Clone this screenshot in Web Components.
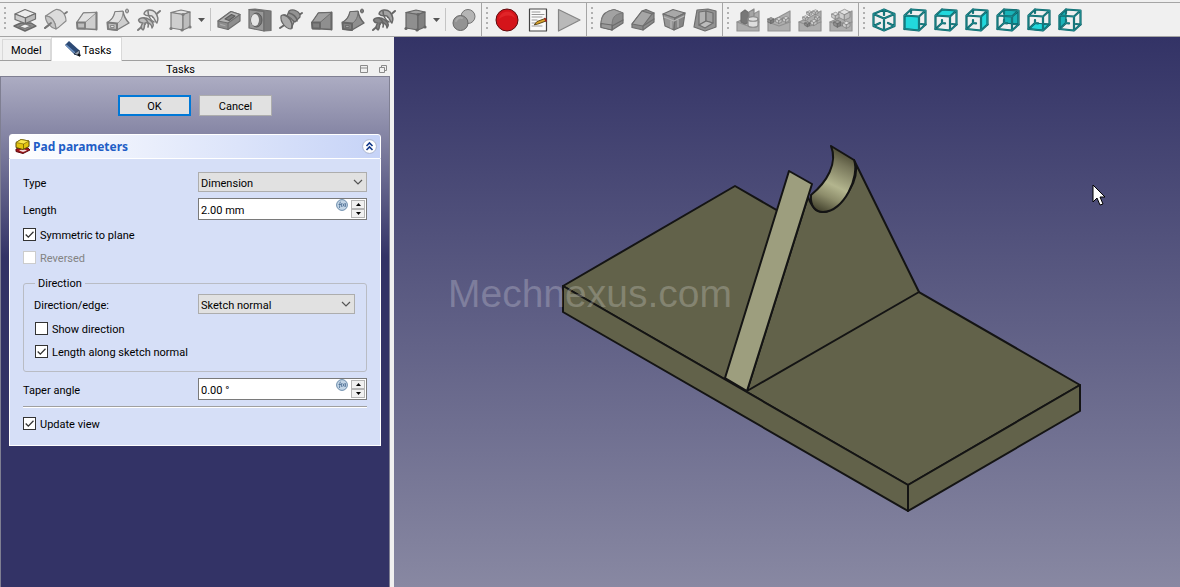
<!DOCTYPE html>
<html lang="en">
<head>
<meta charset="utf-8">
<title>Pad parameters</title>
<style>
  html, body { height: 100%; margin: 0; }
  body { font: 11px/14px Roboto, "Liberation Sans", sans-serif; color: #000; background: #f0f0f0; overflow: hidden; }
</style>
</head>
<body>
<cad-window>
  <tool-bar slot="tools">
    <tool-button icon="pad" label="Pad"></tool-button>
    <tool-button icon="revolution" label="Revolution"></tool-button>
    <tool-button icon="loft" label="Additive loft"></tool-button>
    <tool-button icon="pipe" label="Additive pipe"></tool-button>
    <tool-button icon="helix" label="Additive helix"></tool-button>
    <tool-button icon="box" label="Additive primitive" menu></tool-button>
    <tool-separator></tool-separator>
    <tool-button icon="pocket" label="Pocket"></tool-button>
    <tool-button icon="hole" label="Hole"></tool-button>
    <tool-button icon="groove" label="Groove"></tool-button>
    <tool-button icon="subloft" label="Subtractive loft"></tool-button>
    <tool-button icon="subpipe" label="Subtractive pipe"></tool-button>
    <tool-button icon="subhelix" label="Subtractive helix"></tool-button>
    <tool-button icon="subbox" label="Subtractive primitive" menu></tool-button>
    <tool-separator></tool-separator>
    <tool-button icon="boolean" label="Boolean operation"></tool-button>
  </tool-bar>
  <tool-bar slot="tools">
    <tool-button icon="record" label="Record macro"></tool-button>
    <tool-button icon="macros" label="Macros"></tool-button>
    <tool-button icon="play" label="Execute macro"></tool-button>
  </tool-bar>
  <tool-bar slot="tools">
    <tool-button icon="fillet" label="Fillet"></tool-button>
    <tool-button icon="chamfer" label="Chamfer"></tool-button>
    <tool-button icon="draft" label="Draft"></tool-button>
    <tool-button icon="thickness" label="Thickness"></tool-button>
  </tool-bar>
  <tool-bar slot="tools">
    <tool-button icon="mirror" label="Mirrored"></tool-button>
    <tool-button icon="linear" label="Linear pattern"></tool-button>
    <tool-button icon="polar" label="Polar pattern"></tool-button>
    <tool-button icon="multi" label="MultiTransform"></tool-button>
  </tool-bar>
  <tool-bar slot="tools" class="last">
    <tool-button icon="iso" label="Isometric"></tool-button>
    <tool-button icon="front" label="Front"></tool-button>
    <tool-button icon="top" label="Top"></tool-button>
    <tool-button icon="right" label="Right"></tool-button>
    <tool-button icon="rear" label="Rear"></tool-button>
    <tool-button icon="bottom" label="Bottom"></tool-button>
    <tool-button icon="left" label="Left"></tool-button>
  </tool-bar>

  <combo-dock slot="dock">
    <task-box heading="Pad parameters">
      <select-field label="Type" value="Dimension"></select-field>
      <spin-field label="Length" value="2.00 mm"></spin-field>
      <check-field label="Symmetric to plane" checked></check-field>
      <check-field label="Reversed" disabled></check-field>
      <group-box heading="Direction">
        <select-field class="inner" label="Direction/edge:" value="Sketch normal"></select-field>
        <check-field label="Show direction"></check-field>
        <check-field label="Length along sketch normal" checked></check-field>
      </group-box>
      <spin-field label="Taper angle" value="0.00 °"></spin-field>
      <line-rule></line-rule>
      <check-field label="Update view" checked></check-field>
    </task-box>
  </combo-dock>

  <model-view slot="view"></model-view>
</cad-window>

<script>
const define = (name, build) => customElements.define(name, class extends HTMLElement {
  constructor() { super(); this.attachShadow({ mode: "open" }); }
  connectedCallback() { this.shadowRoot.innerHTML = build(this); }
});
const path = (d, fill = "none", stroke = "#6e6e6e", w = 1.2) =>
  `<path d="${d}" fill="${fill}" stroke="${stroke}" stroke-width="${w}" stroke-linejoin="round" stroke-linecap="round"/>`;

/* palettes: additive tools are light grey, subtractive ones darker */
const LIGHT = ["#e2e2e2", "#cecece", "#bdbdbd", "#7c7c7c"];
const DARK = ["#a2a2a2", "#8f8f8f", "#808080", "#666"];

const loft = ([a, b, c, s]) =>
  path("M2 14.500L8.500 5L21.500 4.500V21.500L2.500 20.500Z", b, s, 1.5) + path("M2 14.500L8.500 5L21.500 4.500L10 14.500Z", a, s, 0.8) +
  path("M21.500 4.500V21.500", "none", s, 1.8) + path("M2 14.500H10V20.500L2.500 20.500Z", c, s, 1.8);
const pipe = ([a, b, c, s]) =>
  path("M1.500 14.500C6 12 8 9 9 4L17 3.500C18 9 20 12 23 15L11 22L2 21Z", b, s, 1.4) + path("M9 4C8 9 6 12 1.500 14.500L11 15.500C15 13 17 9 17 3.500Z", a, s, 0.8) +
  path("M1.500 14.500L11 15.500V22L2 21Z", c, s, 2) + path("M5 17.500H8V19.500H5Z", a, s, 0.8) +
  `<ellipse cx="21" cy="3" rx="1.500" ry="2" fill="${c}" stroke="${s}"/>`;
const helix = ([a, b, c, s]) =>
  path("M1 22L8 16M16 9L23 3", "none", s, 2) +
  path("M1.500 12C3 9 9 9 13 12C17 15 17 18 15 20C15 16 11 14 8 15C7 18 8 21 6 22C3 20 4 17 6 15C4 15 2 14 1.500 12Z", c, s, 1.4) +
  path("M7 6C8 1 15 1 18 4C21 8 22 11 20 15C18 14 18 10 15 8C12 7 10 9 7 6Z", a, s, 1.4) +
  path("M11 3C11 7 13 12 17 14M7 10C10 11 12 16 11 19", "none", s, 1.6);
const box = ([a, b, c, s]) =>
  path("M3 4.500L13 2L22 4L15 6.500Z", a, s) + path("M3 4.500L15 6.500V22L3 20Z", b, s) + path("M15 6.500L22 4V19L15 22Z", c, s) +
  [[3, 20.5], [14, 22], [22, 19], [15, 6.5]].map(([x, y]) => `<circle cx="${x}" cy="${y}" r="1.600" fill="${s}"/>`).join("");
const block = (x, y, k, [a, b, c, s]) =>
  path(`M${x} ${y}l${k} ${-k / 2}l${k} ${k / 2}l${-k} ${k / 2}Z`, a, s, 0.7) +
  path(`M${x} ${y}l${k} ${k / 2}v${k}l${-k} ${-k / 2}Z`, b, s, 0.7) +
  path(`M${x + k} ${y + k / 2}l${k} ${-k / 2}v${k}l${-k} ${k / 2}Z`, c, s, 0.7);
const ground = path("M1 14L12 9L23 3V23H1Z", "#adadad", "#939393") + path("M1 14L12 18L23 14", "none", "#8f8f8f");

const TEAL = "#0c666b";
const FACE = {
  front: "M1.500 7.500L16 8.500V22.500L1.500 21Z", top: "M1.500 7.500L8 1.500L22.500 2.500L16 8.500Z",
  right: "M16 8.500L22.500 2.500V16.500L16 22.500Z", rear: "M8 1.500L22.500 2.500V16.500L8 15Z",
  bottom: "M1.500 21L8 15L22.500 16.500L16 22.500Z", left: "M1.500 7.500L8 1.500V15L1.500 21Z"
};
const frame = d => path(d, "none", TEAL, 2.2) + path(d, "none", "#2b9da1", 0.6);
const cube = side => {
  const back = frame("M8 1.500V5M8 12V15L11 15.300M18 16L22.500 16.500M8 15L1.500 21");
  const front = frame("M1.500 7.500L16 8.500V22.500L1.500 21ZM1.500 7.500L8 1.500L22.500 2.500L16 8.500M22.500 2.500V16.500L16 22.500");
  const behind = ["rear", "bottom", "left"].includes(side);
  const face = path(FACE[side], side === "rear" || side === "left" ? "#19b3b8" : "#22d8dc", behind ? TEAL : "none");
  return behind ? face + back + front : back + face + front;
};

const ICONS = {
  pad: path("M1 18L8 15H18L23 18L12 23Z", "#8f8f8f", "#686868", 1.4) + path("M6 18.500L12 16L18 18L12 20.500Z", "#eee", "#777") +
    path("M2 6L12 1.500L22.500 5.500L12.500 10Z", "#ececec") + path("M2 6L12.500 10V15.500L2 11.500Z", "#cdcdcd") + path("M12.500 10L22.500 5.500V11L12.500 15.500Z", "#bbb"),
  revolution: path("M1 20L23 4", "none", "#777", 1.8) + path("M1.500 8C5 6 8 3 12 1.500C17 1 22 6 22 13C19 15 16 19 12 21C12 15 8 8 1.500 8Z", "#dcdcdc", "#8b8b8b") +
    path("M1.500 8C1 14 7 20 12 21C12 15 8 8 1.500 8Z", "#c6c6c6", "#8b8b8b") + path("M1 20L7 15", "none", "#777", 1.8),
  loft: loft(LIGHT), pipe: pipe(LIGHT), helix: helix(LIGHT), box: box(LIGHT),
  pocket: path("M1 13L14 3.500L23 6.500V13L11 21.500L1 19Z", "#8e8e8e") + path("M1 13L14 3.500L23 6.500L11 15Z", "#b4b4b4") +
    path("M8 11L14.500 6.500L18 8L12 12.500Z", "#7b7b7b", "#5c5c5c") + path("M11 15V21.500", "none") + path("M3 15L9 17V19L3 17.500Z", "#aaa", "#888", .8),
  hole: path("M1 1.500L16 3.500V23L1 20Z", "#999") + path("M1 1.500L7 1L23 3V22.500L16 23V3.500Z", "#7b7b7b") +
    `<ellipse cx="8.500" cy="12" rx="5.500" ry="7" fill="#737373" stroke="#595959"/><ellipse cx="7" cy="12" rx="4" ry="6" fill="#e5e5e5"/>`,
  groove: path("M1 20L23 5", "none", "#666", 2) + path("M10 3C14 0 22 4 21 9L16 14L8 8Z", "#929292", "#666") +
    path("M2 8C5 5 12 9 15 14L12 21C7 21 1 14 2 8Z", "#aaa", "#666") + path("M5 7C10 8 14 14 13 20M10 5C14 6 18 9 18 13", "none", "#666", 1.6),
  subloft: loft(DARK), subpipe: pipe(DARK), subhelix: helix(DARK), subbox: box(DARK),
  boolean: `<circle cx="16" cy="8.500" r="7" fill="#b5b5b5" stroke="#737373"/><circle cx="8.500" cy="15" r="7.500" fill="#939393" stroke="#666"/>` +
    path("M4 13C5 10 8 9 10 10", "none", "#a8a8a8", 2),
  record: `<circle cx="12" cy="12" r="11" fill="#d4141a" stroke="#5d0b0e"/>` + path("M4 11C5 2 18 1 20 10C15 6 9 7 4 11Z", "#e02428", "none"),
  macros: path("M3.500 1H20.500V23H3.500Z", "#fbfbfb", "#444", 1.2) + path("M6 4H14M6 6.500H18M6 9H16M6 12H11M6 15H10M6 18H16", "none", "#999", 1) +
    path("M8.500 16.500L11 13.500L19 10.500L20 13L12 16Z", "#dba32a", "#4f3c10", .9) + path("M19 10.500L20 13", "none", "#a22", 1.6),
  play: path("M1.500 1.500L23 12L1.500 23Z", "#b9b9b9", "#858585"),
  fillet: path("M1 17C1 8 4 5 9 3L14 1.500L23 5V15L12 22L1 19Z", "#8b8b8b") + path("M1 17C1 8 5 5 9 3L14 1.500L23 5C14 6 12 10 12 18Z", "#a2a2a2", "#777", .9) + path("M12 18L23 12M12 18V22", "none", "#6b6b6b") + path("M1 15.500L12 17V22L1 19.500Z", "#999", "#6b6b6b"),
  chamfer: path("M1 16L11 3L15 1.500L23 5V14L12 22L1 19.500Z", "#8b8b8b") + path("M1 16L11 3L21 6L12 18Z", "#a6a6a6") + path("M12 18V22M12 18L23 11M21 6L23 5", "none"),
  draft: path("M1 6L11 1.500L23 5L13 10Z", "#a8a8a8") + path("M1 6L13 10L12 22L3 18Z", "#969696") + path("M13 10L23 5L21 18L12 22Z", "#858585") + path("M2 9L12 13L22 8M9 13V20M16 12V19", "none", "#b8b8b8"),
  thickness: path("M4 2L15 1L23 3V19L12 23L1 19Z", "#929292") + path("M6 4L13 3V13L6 17Z", "#b2b2b2") + path("M13 3L20 5V15L13 13Z", "#9f9f9f") + path("M6 17L13 13L20 15L12 20Z", "#bcbcbc"),
  mirror: ground + path("M5 5L9 2L13 5V14L9 16L5 14Z", "#777") + path("M13 4L18 1V8L13 10Z", "#a5a5a5", "#888") + path("M12 11C12 8 22 8 22 11V17C22 20 12 20 12 17Z", "#ddd", "#888") + path("M12 11C12 14 22 14 22 11", "none", "#888"),
  linear: ground + block(1, 11, 3, DARK) + block(9, 11, 3, LIGHT) + block(16, 10, 3, LIGHT),
  polar: ground + block(9, 4, 2.5, LIGHT) + block(15, 3, 2.5, LIGHT) + block(5, 9, 2.5, LIGHT) + block(17, 9, 2.5, LIGHT) + block(13, 13, 3, LIGHT) + block(7, 15, 2.5, DARK),
  multi: ground + block(10, 4, 5.5, LIGHT) + block(3, 6, 3.5, LIGHT) + block(5, 14, 3.5, DARK) + block(14, 15, 3.5, LIGHT),
  iso: frame("M12 1.500L22.500 6V18L12 22.500L1.500 18V6ZM1.500 6L12 10.500L22.500 6M12 10.500V22.500M12 1.500V7M1.500 18L8 15M22.500 18L16 15"),
  front: cube("front"), top: cube("top"), right: cube("right"), rear: cube("rear"), bottom: cube("bottom"), left: cube("left")
};

define("tool-button", el => `
  <style>
    :host { display: flex; align-items: center; }
    button { all: unset; display: flex; align-items: center; justify-content: center; width: 31px; height: 32px; }
    button.menu { width: 12px; }
    svg { display: block; }
  </style>
  <button aria-label="${el.getAttribute("label")}"><svg width="24" height="24" viewBox="0 0 24 24">${ICONS[el.getAttribute("icon")]}</svg></button>
  ${el.hasAttribute("menu") ? `<button class="menu" aria-label="More"><svg width="7" height="4" viewBox="0 0 7 4"><path d="M0 0H7L3.500 4Z" fill="#555"/></svg></button>` : ""}`);

define("tool-separator", () => `
  <style>
    :host { display: flex; justify-content: center; width: 6px; }
    i { width: 1px; margin: 5px 0; background: #c4c4c4; }
  </style><i></i>`);

define("tool-bar", () => `
  <style>
    :host { display: flex; box-sizing: border-box; padding-right: 2px; border-right: 1px solid #a5a5a5; }
    :host(.last) { flex: 1; border-right: 0; }
    .grip { width: 2px; margin: 4px 3px 4px 4px; background: repeating-linear-gradient(#b0b0b0 0 2px, transparent 2px 5px); }
  </style>
  <div class="grip"></div><slot></slot>`);

define("cad-window", () => `
  <style>
    :host { display: flex; flex-direction: column; height: 100%; }
    .tools { display: flex; margin-top: 2px; height: 33px; border-top: 1px solid #a5a5a5; border-bottom: 1px solid #a5a5a5; overflow: hidden; }
    .main { flex: 1; display: flex; gap: 4px; min-height: 0; }
    .dock { width: 390px; display: flex; }
    .view { flex: 1; display: flex; min-width: 0; }
    ::slotted(combo-dock), ::slotted(model-view) { flex: 1; min-width: 0; }
  </style>
  <div class="tools" role="toolbar"><slot name="tools"></slot></div>
  <div class="main">
    <div class="dock"><slot name="dock"></slot></div>
    <div class="view"><slot name="view"></slot></div>
  </div>`);

define("combo-dock", () => `
  <style>
    :host { display: flex; flex-direction: column; }
    button { font: inherit; color: inherit; border-radius: 0; }
    .tabs { display: flex; align-items: flex-end; height: 24px; padding-left: 2px; border-bottom: 1px solid #a0a0a0; box-sizing: border-box; }
    .tabs button { display: flex; align-items: center; gap: 2px; box-sizing: border-box; height: 21px; padding: 2px 8px 0; border: 1px solid #d9d9d9; border-bottom: 0; background: #f0f0f0; }
    .tabs button.on { height: 24px; margin-bottom: -1px; padding: 2px 10px 0 12px; background: #fff; }
    .tabs svg { margin-bottom: 4px; }
    .title { display: flex; align-items: center; gap: 11px; height: 15px; padding: 0 3px 0 12px; }
    .title span { flex: 1; padding-top: 2px; text-align: center; }
    .title button { all: unset; }
    svg { display: block; }
    .body { flex: 1; box-sizing: border-box; padding: 18px 8px; border: solid #7f7f92; border-width: 1px 1px 0; background: linear-gradient(#acacc2, #333366 180px); }
    .actions { display: flex; justify-content: center; gap: 8px; margin-bottom: 18px; }
    .actions button { width: 73px; height: 21px; padding: 2px 0 0; border: 1px solid #adadad; background: #e1e1e1; }
    .actions .default { border: 2px solid #0078d7; }
  </style>
  <div class="tabs" role="tablist">
    <button role="tab">Model</button>
    <button role="tab" class="on" aria-selected="true">
      <svg width="17" height="16" viewBox="0 0 17 16"><path d="M1 4L5 0L15 9L16 15L10 13Z" fill="#2c4a75"/><path d="M2 4L11 12" stroke="#6e93c4" stroke-width="1.500"/><path d="M10 13L15 9L16 15Z" fill="#9aa3b0" stroke="#26364d"/><path d="M14 13L16 15" stroke="#111" stroke-width="2"/></svg>
      Tasks</button>
  </div>
  <div class="title"><span>Tasks</span>
    <button aria-label="Minimise"><svg width="8" height="8" viewBox="0 0 8 8"><path d="M.5 .5H7.500V7.500H.5ZM.5 3H7.500" fill="none" stroke="#8a8a8a"/></svg></button>
    <button aria-label="Float"><svg width="8" height="8" viewBox="0 0 8 8"><path d="M2.500 2.500V.5H7.500V5.500H5.500M.5 2.500H5.500V7.500H.5Z" fill="none" stroke="#8a8a8a"/></svg></button>
  </div>
  <div class="body">
    <div class="actions"><button class="default">OK</button><button>Cancel</button></div>
    <slot></slot>
  </div>`);

define("task-box", el => `
  <style>
    :host { display: block; }
    header { display: flex; align-items: center; gap: 3px; box-sizing: border-box; height: 25px; padding: 0 3px 0 5px; border: 1px solid #fff; border-radius: 3px 3px 0 0; background: linear-gradient(90deg, #fff, #c6d3f7); }
    h2 { flex: 1; margin: 0; padding-top: 1px; font: 700 12px/16px "Noto Sans", "Open Sans", sans-serif; color: #215dc6; }
    button { all: unset; }
    svg { display: block; }
    .content { padding: 13px 13px 15px; border: 1px solid #fff; border-top: 0; background: #d6dff7; }
  </style>
  <header>
    <svg width="15" height="15" viewBox="0 0 15 15"><path d="M1 10L5 9H13L15 11L8 14.500L1 12.500Z" fill="#a3161b" stroke="#5e0c10"/><path d="M4 11.500L8 10L12 11.500L8 13Z" fill="#f3dede"/><path d="M1 3.500L6 .5L14 2V7.500L8 10.500L1 8.500Z" fill="#e3c40f" stroke="#5b4c06"/><path d="M1 3.500L6 .5L14 2L8.500 5Z" fill="#fbe84c" stroke="#7d6a0a" stroke-width=".7"/><path d="M8.500 5V10" stroke="#5b4c06" stroke-width=".7"/></svg>
    <h2>${el.getAttribute("heading")}</h2>
    <button aria-label="Collapse"><svg width="15" height="15" viewBox="0 0 15 15"><circle cx="7.500" cy="7.500" r="6.900" fill="#fff" stroke="#a9b4cf"/><path d="M4.500 7L7.500 4L10.500 7M4.500 11L7.500 8L10.500 11" fill="none" stroke="#13398a" stroke-width="1.600"/></svg></button>
  </header>
  <div class="content"><slot></slot></div>`);

define("select-field", el => `
  <style>
    :host { display: grid; grid-template-columns: 175px minmax(0, 1fr); align-items: center; margin-bottom: 6px; }
    :host(.inner) { grid-template-columns: 164px minmax(0, 1fr); margin-bottom: 8px; }
    label { padding-top: 3px; }
    .box { display: grid; }
    select { grid-area: 1 / 1; appearance: none; box-sizing: border-box; width: 100%; height: 20px; margin: 0; padding: 3px 20px 0 2px; border: 1px solid #adadad; border-radius: 0; background: #e1e1e1; font: inherit; color: #000; }
    svg { grid-area: 1 / 1; place-self: center end; margin-right: 4px; pointer-events: none; }
  </style>
  <label for="c">${el.getAttribute("label")}</label>
  <div class="box"><select id="c"><option>${el.getAttribute("value")}</option></select>
    <svg width="10" height="6" viewBox="0 0 10 6"><path d="M1 1L5 5L9 1" fill="none" stroke="#555" stroke-width="1.200"/></svg></div>`);

define("spin-field", el => `
  <style>
    :host { display: grid; grid-template-columns: 175px minmax(0, 1fr); align-items: center; }
    label { padding-top: 3px; }
    .box { display: flex; box-sizing: border-box; height: 22px; border: 1px solid #7a7a7a; background: #fff; }
    input { flex: 1; min-width: 0; padding: 3px 0 0 2px; border: 0; background: none; font: inherit; color: #000; }
    .steps { display: flex; flex-direction: column; width: 14px; margin: 1px 1px 1px 3px; }
    button { flex: 1; display: flex; align-items: center; justify-content: center; padding: 0; border: 1px solid #b5b5b5; border-radius: 0; background: #f0f0f0; min-height: 0; }
    svg { display: block; }
  </style>
  <label for="c">${el.getAttribute("label")}</label>
  <div class="box"><input id="c" value="${el.getAttribute("value")}">
    <svg width="12" height="12" viewBox="0 0 12 12" role="img" aria-label="Formula"><circle cx="6" cy="6" r="5.400" fill="#c3d5e6" stroke="#6c8cab"/><path d="M5 3C3.500 2.500 4 5 3.500 9M2.500 5.500H5M5.800 4Q5 6 5.800 8M6.800 4.500L8.400 7.500M8.400 4.500L6.800 7.500M9.200 4Q10 6 9.200 8" fill="none" stroke="#4a6c92" stroke-width=".8"/></svg>
    <div class="steps">
      <button aria-label="Increase"><svg width="5" height="3" viewBox="0 0 5 3"><path d="M0 3L2.500 0L5 3Z"/></svg></button>
      <button aria-label="Decrease"><svg width="5" height="3" viewBox="0 0 5 3"><path d="M0 0L2.500 3L5 0Z"/></svg></button>
    </div></div>`);

define("check-field", el => `
  <style>
    :host { display: block; margin-top: 8px; }
    :host([disabled]) { margin-top: 10px; }
    label { display: flex; align-items: center; gap: 4px; height: 13px; }
    .box { display: grid; }
    .text { padding-top: 2px; line-height: 13px; }
    input { grid-area: 1 / 1; appearance: none; box-sizing: border-box; width: 13px; height: 13px; margin: 0; border: 1px solid #333; background: #fff; }
    input:disabled { border-color: #ccc; }
    :host([disabled]) label { color: #838383; }
    svg { grid-area: 1 / 1; place-self: center; display: none; pointer-events: none; }
    input:checked + svg { display: block; }
  </style>
  <label><span class="box"><input type="checkbox" ${el.hasAttribute("checked") ? "checked" : ""} ${el.hasAttribute("disabled") ? "disabled" : ""}>
    <svg width="9" height="9" viewBox="0 0 9 9"><path d="M.7 4.500L3.300 7.100L8.500 1.700" fill="none" stroke="#333" stroke-width="1.300"/></svg></span><span class="text">${el.getAttribute("label")}</span></label>`);

define("group-box", el => `
  <style>
    :host { display: block; margin: 13px 0 6px; }
    fieldset { min-width: 0; margin: 0; padding: 5px 11px 13px 10px; border: 1px solid #b9bcc4; border-radius: 3px; }
    legend { margin-left: 1px; padding: 0 3px; height: 12px; line-height: 14px; }
    ::slotted(check-field) { margin-left: 1px; }
    ::slotted(check-field:last-child) { margin-top: 10px; }
  </style>
  <fieldset><legend>${el.getAttribute("heading")}</legend><slot></slot></fieldset>`);

define("line-rule", () => `
  <style>:host { display: block; height: 1px; margin: 6px 0 9px; border-top: 1px solid #a0a0a0; background: #fff; }</style>`);

define("model-view", () => `
  <style>
    :host { display: block; background: linear-gradient(#333366, #8888a2); }
    svg { display: block; width: 100%; height: 100%; }
    text { font: 39px "Liberation Sans", sans-serif; fill: #fff; fill-opacity: .22; }
    .edge { stroke: #141414; stroke-width: 2; stroke-linejoin: round; stroke-linecap: round; }
  </style>
  <svg viewBox="394 37 786 550" preserveAspectRatio="xMidYMid slice">
    <defs>
      <linearGradient id="bore" gradientUnits="userSpaceOnUse" x1="846" y1="152" x2="818" y2="210">
        <stop offset="0" stop-color="#4c4a34"/><stop offset=".2" stop-color="#77765a"/><stop offset=".55" stop-color="#b3b58e"/><stop offset=".75" stop-color="#8d8d6b"/><stop offset="1" stop-color="#45442f"/>
      </linearGradient>
    </defs>
    <g class="edge" fill="#62624a">
      <path d="M563 286L735 186L1080 385L908 485Z"/>
      <path d="M563 286L908 485V511L563 312Z"/>
      <path d="M908 485L1080 385V411L908 511Z"/>
      <path d="M747 391L808 197C812 208 817 212 823 212C836 212 858 186 856 166L854 160L919 292Z"/>
      <path fill="url(#bore)" d="M831 146L854 160C860 176 844 212 823 212C816 212 810 207 811 195C827 182 838 163 831 146Z"/>
      <path fill="#9d9e7e" d="M789 171L812 184L747 391L725 378Z"/>
    </g>
    <text x="448" y="307">Mechnexus.com</text>
    <path d="M1093 185V202L1097 198L1100 205L1103 204L1100 197H1105Z" fill="#fff" stroke="#000" stroke-width="1"/>
  </svg>`);
</script>
</body>
</html>
